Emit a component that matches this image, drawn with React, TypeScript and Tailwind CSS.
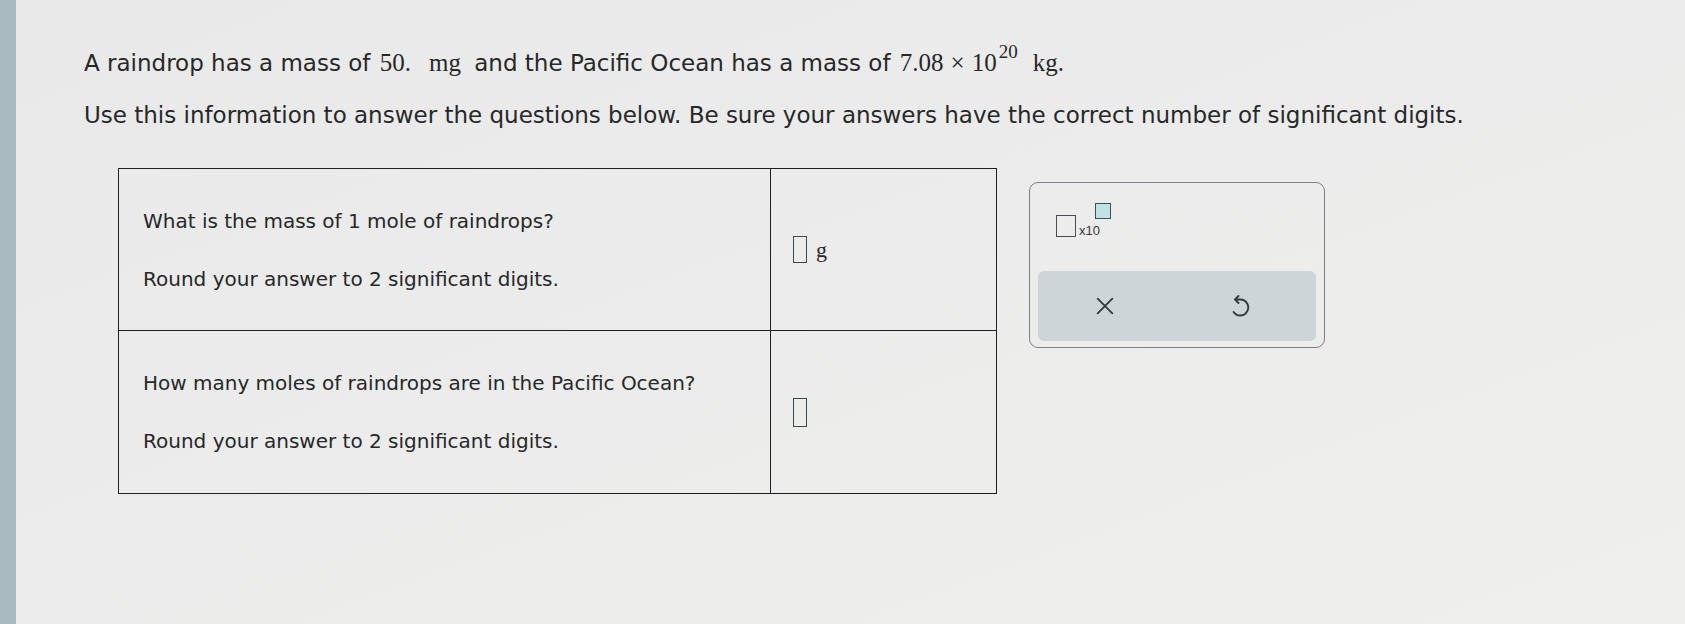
import React from "react";

function Box({ className = "" }: { className?: string }) {
  return <span className={`inline-block border-[1.5px] border-[#3d4750] ${className}`} />;
}

const serif = { fontFamily: '"Liberation Serif", "Times New Roman", serif' };

export default function App() {
  return (
    <div className="w-[1685px] h-[624px] flex bg-gradient-to-br from-[#e8e9e8] to-[#efefee] text-[#26282a] overflow-hidden" style={{ fontFamily: '"DejaVu Sans", Verdana, sans-serif' }}>
      {/* left edge of the window */}
      <div className="w-[16px] h-full bg-[#a9bac0]" />

      <div className="flex-1 pl-[68px] pt-[46px]">
        <p className="text-[23px] leading-[34px]">
          A raindrop has a mass of{" "}
          <span className="text-[25px] ml-[2px]" style={serif}>
            50.<span className="ml-[18px] mr-[6px]">mg</span>
          </span>{" "}
          and the Pacific Ocean has a mass of{" "}
          <span className="text-[25px] ml-[2px]" style={serif}>
            7.08<span className="mx-[7px]">×</span>10
            <sup className="text-[19px] -top-[13px] ml-[2px]">20</sup>
            <span className="ml-[15px]">kg.</span>
          </span>
        </p>
        <p className="mt-[18px] text-[23px] leading-[34px]">
          Use this information to answer the questions below. Be sure your answers have the correct number of significant digits.
        </p>

        <div className="mt-[36px] ml-[34px] flex items-start gap-[32px]">
          {/* question table */}
          <div className="w-[879px] border-[1.5px] border-[#1e2022] grid grid-cols-[652px_1fr]">
            <div className="h-[162px] border-r-[1.5px] border-b-[1.5px] border-[#1e2022] pl-[24px] flex flex-col justify-center gap-[28px] text-[20px] leading-[30px]">
              <p>What is the mass of 1 mole of raindrops?</p>
              <p>Round your answer to 2 significant digits.</p>
            </div>
            <div className="h-[162px] border-b-[1.5px] border-[#1e2022] pl-[22px] flex items-center gap-[9px]">
              <Box className="w-[14px] h-[27px] border-[#2e4a80]" />
              <span className="text-[22px]" style={serif}>g</span>
            </div>
            <div className="h-[162px] border-r-[1.5px] border-[#1e2022] pl-[24px] flex flex-col justify-center gap-[28px] text-[20px] leading-[30px]">
              <p>How many moles of raindrops are in the Pacific Ocean?</p>
              <p>Round your answer to 2 significant digits.</p>
            </div>
            <div className="h-[162px] pl-[22px] flex items-center">
              <Box className="w-[14px] h-[29px] border-[#2e4a80]" />
            </div>
          </div>

          {/* answer tools */}
          <div className="mt-[14px] w-[296px] h-[166px] rounded-[9px] border-[1.5px] border-[#7c8084] px-[8px] pt-[20px] flex flex-col">
            <div className="flex items-start pl-[18px] h-[46px]">
              <Box className="mt-[12px] w-[20px] h-[22px] border-[#4a4e52]" />
              <span className="mt-[22px] ml-[3px] text-[13px] leading-[12px] text-[#34383c]" style={{ fontFamily: '"Liberation Sans", Arial, sans-serif' }}>x10</span>
              <span className="-ml-[5px] mt-[0px] inline-block w-[16px] h-[16px] border-[1.5px] border-[#3a5358] bg-[#bfe2e5]" />
            </div>
            <div className="mt-[22px] h-[70px] rounded-[6px] bg-[#cdd5d8] flex items-center pl-[56px] gap-[112px]">
              <svg width="22" height="22" viewBox="0 0 24 24" fill="none" stroke="#2f3a40" strokeWidth="2" strokeLinecap="round">
                <path d="M4 4 L20 20 M20 4 L4 20" />
              </svg>
              <svg width="24" height="27" viewBox="0 0 24 26" fill="none" stroke="#2f3a40" strokeWidth="1.9" strokeLinecap="round" strokeLinejoin="round">
                <path d="M7.5 6 H12 A8 8 0 1 1 5.6 18.5" />
                <path d="M10.5 2.5 L7 6 L10.5 9.5" />
              </svg>
            </div>
          </div>
        </div>
      </div>
    </div>
  );
}
